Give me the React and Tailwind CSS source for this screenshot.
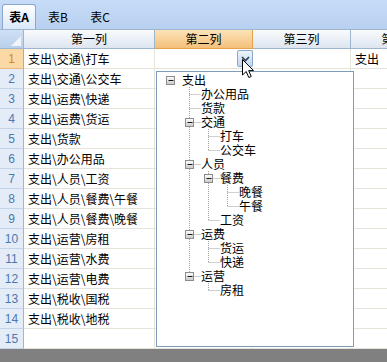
import React from 'react';

const FONT = { fontFamily: '"Noto Sans CJK SC", "Noto Sans", sans-serif' };

const rows = [
  ['支出\\交通\\打车', '', '', '支出'],
  ['支出\\交通\\公交车'],
  ['支出\\运费\\快递'],
  ['支出\\运费\\货运'],
  ['支出\\货款'],
  ['支出\\办公用品'],
  ['支出\\人员\\工资'],
  ['支出\\人员\\餐费\\午餐'],
  ['支出\\人员\\餐费\\晚餐'],
  ['支出\\运营\\房租'],
  ['支出\\运营\\水费'],
  ['支出\\运营\\电费'],
  ['支出\\税收\\国税'],
  ['支出\\税收\\地税'],
  [''],
];

const tree = {
  label: '支出',
  children: [
    { label: '办公用品' },
    { label: '货款' },
    { label: '交通', children: [{ label: '打车' }, { label: '公交车' }] },
    {
      label: '人员',
      children: [
        { label: '餐费', children: [{ label: '晚餐' }, { label: '午餐' }] },
        { label: '工资' },
      ],
    },
    { label: '运费', children: [{ label: '货运' }, { label: '快递' }] },
    { label: '运营', children: [{ label: '房租' }] },
  ],
};

function flatten(node, level, trail, hasNext, out) {
  out.push({ label: node.label, level, trail, hasNext, open: !!node.children });
  (node.children || []).forEach((c, i) =>
    flatten(c, level + 1, [...trail, hasNext], i < node.children.length - 1, out)
  );
  return out;
}

const items = flatten(tree, 0, [], false, []);

function TreeGlyph({ item }) {
  const { level, trail, hasNext, open } = item;
  const cx = (i) => 13 + 19 * i + 0.5;
  const w = 19 * level + 25;
  const dot = { stroke: '#a0a0a0', strokeWidth: 1, strokeDasharray: '1 1' };
  return (
    <svg width={w} height="14" className="shrink-0">
      {trail.map((next, j) =>
        j >= 1 && next ? <line key={j} x1={cx(j)} y1="0" x2={cx(j)} y2="14" {...dot} /> : null
      )}
      {level >= 1 && (
        <>
          <line x1={cx(level)} y1="0" x2={cx(level)} y2={hasNext ? 14 : 7} {...dot} />
          <line x1={cx(level)} y1="7.5" x2={cx(level) + 11} y2="7.5" {...dot} />
        </>
      )}
      {open && (
        <g>
          <defs>
            <linearGradient id="bx" x1="0" y1="0" x2="0" y2="1">
              <stop offset="0" stopColor="#ffffff" />
              <stop offset="1" stopColor="#c8c8c8" />
            </linearGradient>
          </defs>
          <rect x={cx(level) - 4} y="3.5" width="8" height="8" fill="url(#bx)" stroke="#8c8c8c" />
          <line x1={cx(level) - 2} y1="7.5" x2={cx(level) + 3} y2="7.5" stroke="#1a1a1a" />
        </g>
      )}
    </svg>
  );
}

function Tab({ label, active }) {
  return (
    <div
      className={
        active
          ? 'h-[25px] w-[34px] flex items-center justify-center border border-b-0 border-[#8ba8cc] rounded-t-[3px] bg-gradient-to-b from-[#ffffff] to-[#dbe8f8] font-bold text-black'
          : 'h-[25px] w-[40px] flex items-center justify-center text-black'
      }
    >
      {label}
    </div>
  );
}

export default function App() {
  const colW = ['w-[131px]', 'w-[98px]', 'w-[98px]', 'w-[98px]'];
  const heads = ['第一列', '第二列', '第三列', '第四列'];

  return (
    <div className="w-[387px] h-[362px] relative overflow-hidden bg-white text-[12px] text-black flex flex-col" style={FONT}>
      <div className="h-[29px] shrink-0 flex items-end gap-[2px] pl-[2px] bg-gradient-to-b from-[#c6dcf8] to-[#b8d0f0]">
        <Tab label="表A" active />
        <Tab label="表B" />
        <Tab label="表C" />
      </div>

      <div className="flex h-[20px] shrink-0 border-t border-[#9eb6ce]">
        <div className="w-[24px] shrink-0 relative bg-gradient-to-b from-[#cfe0f5] to-[#b8cfec] border-r border-b border-[#9eb6ce]">
          <div className="absolute right-[2px] bottom-[2px] w-0 h-0 border-l-[10px] border-l-transparent border-b-[10px] border-b-[#f0f4fa]" />
        </div>
        {heads.map((h, i) => (
          <div
            key={h}
            className={
              colW[i] +
              ' shrink-0 flex items-center justify-center border-r border-b whitespace-nowrap ' +
              (i === 1
                ? 'bg-gradient-to-b from-[#fbe3b9] to-[#f4c07a] border-[#e8a24a]'
                : 'bg-gradient-to-b from-[#f9fbfd] to-[#dde5ef] border-[#9eb6ce]')
            }
          >
            {h}
          </div>
        ))}
      </div>

      {rows.map((r, ri) => (
        <div key={ri} className="flex h-[20px] shrink-0">
          <div
            className={
              'w-[24px] shrink-0 flex items-center justify-center border-r border-b text-[12px] ' +
              (ri === 0
                ? 'bg-[#fbd9a6] text-[#d8862a] border-r-[#e8a24a] border-b-[#e8b878]'
                : 'bg-[#e4ecf7] text-[#4a78b0] border-r-[#9eb6ce] border-b-[#c3d3e8]')
            }
            style={{ fontFamily: '"Liberation Sans", sans-serif' }}
          >
            {ri + 1}
          </div>
          {colW.map((w, ci) => (
            <div
              key={ci}
              className={w + ' shrink-0 flex items-center pl-1 border-r border-b border-[#e4e4da] whitespace-nowrap overflow-hidden'}
            >
              {r[ci] || ''}
            </div>
          ))}
        </div>
      ))}

      <div className="flex-1 bg-[#808080]" />

      <div className="absolute left-[237px] top-[50px] w-[16px] h-[17px] border border-[#8ba8cc] rounded-[2px] bg-gradient-to-b from-[#eef4fc] to-[#c3d5ee] flex items-center justify-center">
        <svg width="9" height="6" viewBox="0 0 9 6">
          <path d="M1 1 L4.5 4.5 L8 1" fill="none" stroke="#2c3e5a" strokeWidth="1.6" />
        </svg>
      </div>

      <div className="absolute left-[156px] top-[71px] w-[198px] h-[276px] border border-[#7f9db9] bg-white pt-[1px]">
        {items.map((it, i) => (
          <div key={i} className="flex items-center h-[14px] leading-[14px] whitespace-nowrap">
            <TreeGlyph item={it} />
            <span>{it.label}</span>
          </div>
        ))}
      </div>

      <svg className="absolute left-[242px] top-[59px]" width="13" height="20" viewBox="0 0 13 20">
        <path d="M0.5 0.5 L0.5 16 L4.2 12.5 L6.8 18.5 L9.2 17.5 L6.7 11.6 L11.5 11.6 Z" fill="#ffffff" stroke="#000000" strokeWidth="1" strokeLinejoin="miter" />
      </svg>
    </div>
  );
}
